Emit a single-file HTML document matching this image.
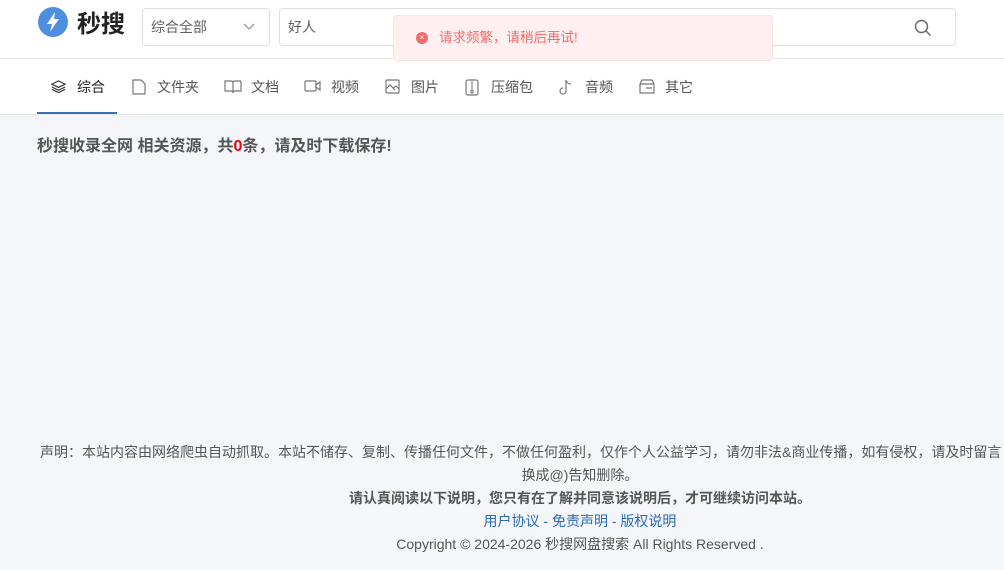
<!DOCTYPE html>
<html><head><meta charset="utf-8"><style>
*{box-sizing:border-box;margin:0;padding:0}
body{width:1004px;height:570px;overflow:hidden;background:#f5f6fa;font-family:"Liberation Sans","Noto Sans CJK SC",sans-serif;position:relative}
.hdr{position:absolute;left:0;top:0;width:1004px;height:59px;background:#fff;border-bottom:1px solid #e6e6e6}
.logo{position:absolute;left:38px;top:7px;width:30px;height:30px;border-radius:50%;background:#4f8fe0}
.brand{position:absolute;left:77px;top:8px;font-size:24px;font-weight:bold;color:#222;line-height:34px}
.sel{position:absolute;left:142px;top:8px;width:128px;height:38px;border:1px solid #dcdfe6;border-radius:4px;font-size:14px;color:#606266;line-height:36px;padding-left:8px}
.inp{position:absolute;left:279px;top:8px;width:677px;height:38px;border:1px solid #dcdfe6;border-radius:4px;font-size:14px;color:#606266;line-height:36px;padding-left:8px}
.toast{position:absolute;left:393px;top:15px;width:380px;height:46px;background:#fef0f0;border:1px solid #fde2e2;border-radius:4px;color:#f56c6c;font-size:13.5px;line-height:44px;padding-left:45px}
.toast i{position:absolute;left:22px;top:16px;width:12px;height:12px;border-radius:50%;background:#f56c6c;color:#fff;font-size:8px;line-height:12px;text-align:center;font-style:normal}
.nav{position:absolute;left:0;top:59px;width:1004px;height:56px;background:#fff;border-bottom:1px solid #e6e6e6}
.nav span{position:absolute;top:0;line-height:56px;font-size:14px;color:#555}
.nav svg{position:absolute;top:20px}
.ul{position:absolute;left:37px;top:53px;width:80px;height:2px;background:#3a6fb0}
.title{position:absolute;left:37px;top:136px;font-size:16px;font-weight:bold;color:#555;line-height:22px}
.foot{position:absolute;left:0;top:441px;width:1160px;text-align:center;font-size:14px;color:#555;line-height:23px;white-space:nowrap}
.l1{position:absolute;left:40px;top:441px;font-size:14px;color:#555;line-height:23px;white-space:nowrap}
</style></head><body>
<div class="hdr">
<div class="logo"><svg width="30" height="30" viewBox="0 0 30 30"><path d="M17 5 L9 17 H14 L12 25 L21 12 H16 Z" fill="#fff"/></svg></div>
<div class="brand">秒搜</div>
<div class="sel">综合全部<svg style="position:absolute;left:100px;top:14px" width="12" height="8" viewBox="0 0 12 8"><path d="M1 1 L6 6 L11 1" stroke="#999" fill="none" stroke-width="1.3"/></svg></div>
<div class="inp">好人<svg style="position:absolute;left:634px;top:10px" width="18" height="18" viewBox="0 0 18 18"><circle cx="7.5" cy="7.5" r="6" stroke="#666" fill="none" stroke-width="1.4"/><path d="M12 12 L16.5 16.5" stroke="#666" stroke-width="1.4"/></svg></div>
</div>
<div class="nav">
<svg style="left:51px" width="15" height="15" viewBox="0 0 16 16"><path d="M8 2 L15 5.5 L8 9 L1 5.5 Z M1 8.5 L8 12 L15 8.5 M1 11 L8 14.5 L15 11" stroke="#333" fill="none" stroke-width="1.2"/></svg><span style="left:77px;color:#222">综合</span>
<svg style="left:132px" width="14" height="16" viewBox="0 0 14 16"><path d="M1 1 H9 L13 5 V15 H1 Z" stroke="#777" fill="none" stroke-width="1.2"/></svg><span style="left:157px">文件夹</span>
<svg style="left:224px" width="18" height="15" viewBox="0 0 18 15"><path d="M1 2 H7 Q9 2 9 4 V14 Q9 12 7 12 H1 Z M17 2 H11 Q9 2 9 4 M9 14 Q9 12 11 12 H17 V2" stroke="#777" fill="none" stroke-width="1.2"/></svg><span style="left:251px">文档</span>
<svg style="left:304px" width="18" height="14" viewBox="0 0 18 14"><rect x="1" y="2" width="11" height="10" rx="1" stroke="#777" fill="none" stroke-width="1.2"/><path d="M12 6 L16 3 V11 L12 8" stroke="#777" fill="none" stroke-width="1.2"/></svg><span style="left:331px">视频</span>
<svg style="left:385px" width="15" height="15" viewBox="0 0 15 15"><rect x="1" y="1" width="13" height="13" rx="1" stroke="#777" fill="none" stroke-width="1.2"/><path d="M1 10 L5 6 L10 11 M8 9 L11 7 L14 10" stroke="#777" fill="none" stroke-width="1.2"/></svg><span style="left:411px">图片</span>
<svg style="left:465px" width="14" height="17" viewBox="0 0 14 17"><rect x="1" y="1" width="12" height="15" rx="2" stroke="#777" fill="none" stroke-width="1.2"/><path d="M7 2 V10 M6 11 H8 V14 H6 Z" stroke="#777" fill="none" stroke-width="1.1"/></svg><span style="left:491px">压缩包</span>
<svg style="left:558px" width="14" height="16" viewBox="0 0 14 16"><path d="M8 1 V12 A3 3 0 1 1 5 9 M8 1 Q9 5 13 5" stroke="#777" fill="none" stroke-width="1.2"/></svg><span style="left:585px">音频</span>
<svg style="left:638px" width="18" height="15" viewBox="0 0 18 15"><path d="M2 5 L4 1 H14 L16 5 V14 H2 Z M2 5 H16 M8 9 H14" stroke="#777" fill="none" stroke-width="1.2"/></svg><span style="left:665px">其它</span>
<div class="ul"></div>
</div>
<div class="toast"><i>×</i>请求频繁，请稍后再试!</div>
<div class="title">秒搜收录全网 相关资源，共<span style="color:#e00">0</span>条，请及时下载保存!</div>
<div class="l1">声明：本站内容由网络爬虫自动抓取。本站不储存、复制、传播任何文件，不做任何盈利，仅作个人公益学习，请勿非法&amp;商业传播，如有侵权，请及时留言</div>
<div class="foot">
<div>&nbsp;</div>
<div>换成@)告知删除。</div>
<div style="font-weight:bold">请认真阅读以下说明，您只有在了解并同意该说明后，才可继续访问本站。</div>
<div style="color:#2a6bb5">用户协议 - 免责声明 - 版权说明</div>
<div>Copyright © 2024-2026 秒搜网盘搜索 All Rights Reserved .</div>
</div>
</body></html>
